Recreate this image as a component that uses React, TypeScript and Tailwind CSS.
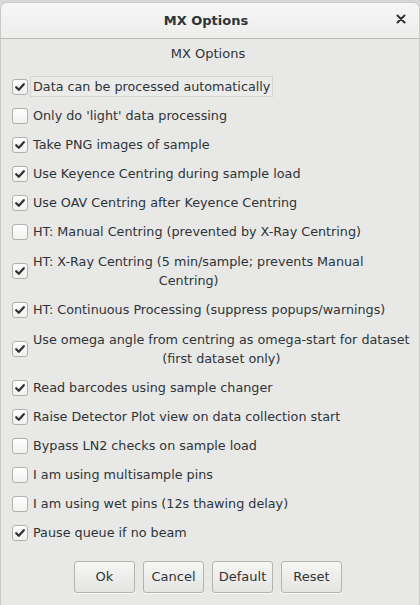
import React from "react";

type Opt = { label: React.ReactNode; checked: boolean; multi?: boolean };

const options: Opt[] = [
  { label: "Data can be processed automatically", checked: true },
  { label: "Only do 'light' data processing", checked: false },
  { label: "Take PNG images of sample", checked: true },
  { label: "Use Keyence Centring during sample load", checked: true },
  { label: "Use OAV Centring after Keyence Centring", checked: true },
  { label: "HT: Manual Centring (prevented by X-Ray Centring)", checked: false },
  {
    label: (
      <>
        <span className="block">HT: X-Ray Centring (5 min/sample; prevents Manual</span>
        <span className="block pr-[19px]">Centring)</span>
      </>
    ),
    checked: true,
    multi: true,
  },
  { label: "HT: Continuous Processing (suppress popups/warnings)", checked: true },
  {
    label: (
      <>
        <span className="block">Use omega angle from centring as omega-start for dataset</span>
        <span className="block">(first dataset only)</span>
      </>
    ),
    checked: true,
    multi: true,
  },
  { label: "Read barcodes using sample changer", checked: true },
  { label: "Raise Detector Plot view on data collection start", checked: true },
  { label: "Bypass LN2 checks on sample load", checked: false },
  { label: "I am using multisample pins", checked: false },
  { label: "I am using wet pins (12s thawing delay)", checked: false },
  { label: "Pause queue if no beam", checked: true },
];

function CheckBox({ checked }: { checked: boolean }) {
  return (
    <div className="w-4 h-4 shrink-0 rounded-[3px] border border-[#b0b0ad] bg-gradient-to-b from-[#ffffff] to-[#f1f1f0] flex items-center justify-center">
      {checked && (
        <svg width="12" height="12" viewBox="0 0 12 12">
          <path d="M2.2 6.2 L4.8 8.8 L9.8 3.2" fill="none" stroke="#2e3436" strokeWidth="2.3" strokeLinecap="round" strokeLinejoin="round" />
        </svg>
      )}
    </div>
  );
}

function Row({ opt, focused }: { opt: Opt; focused?: boolean }) {
  return (
    <div className={"flex items-center pl-[11px] " + (opt.multi ? "py-[5.5px]" : "py-[5px]")}>
      <CheckBox checked={opt.checked} />
      <div
        className={
          "ml-[3px] px-[2px] leading-[19px] whitespace-nowrap " +
          (opt.multi ? "text-center " : "") +
          (focused ? "outline outline-1 outline-[#d3d3d1] bg-[#ebebea]" : "")
        }
      >
        {opt.label}
      </div>
    </div>
  );
}

function Btn({ children }: { children: React.ReactNode }) {
  return (
    <button className="w-[61px] h-[32px] rounded-[3px] border border-[#b3b3b0] bg-gradient-to-b from-[#f6f6f5] to-[#e4e4e2] text-[#2e3436] text-[13px] shadow-[0_1px_0_rgba(255,255,255,0.8)]">
      {children}
    </button>
  );
}

export default function App() {
  return (
    <div
      className="w-[420px] h-[605px] bg-[#d8d8d8] pt-[2px] overflow-hidden text-[12.75px] text-[#2e3436]"
      style={{ fontFamily: '"DejaVu Sans", sans-serif' }}
    >
      <div className="h-[603px] flex flex-col rounded-t-[7px] bg-[#e8e8e7] border-t border-x border-[#c9c9c7] overflow-hidden">
        <div className="relative h-[36px] shrink-0 flex items-center justify-center bg-gradient-to-b from-[#f6f6f6] to-[#ededec] border-b border-[#b9b9b6]">
          <span className="font-bold text-[13px] -ml-[8px]">MX Options</span>
          <span className="absolute right-[11px] top-[9px]">
            <svg width="14" height="14" viewBox="0 0 14 14">
              <path d="M3.5 3.5 L10.5 10.5 M10.5 3.5 L3.5 10.5" stroke="#2e3436" strokeWidth="2" strokeLinecap="round" />
            </svg>
          </span>
        </div>
        <div className="h-[33px] shrink-0 flex items-center justify-center pb-[4px]">
          <span className="-ml-[4px] text-[13px]">MX Options</span>
        </div>
        <div className="flex flex-col">
          {options.map((o, i) => (
            <Row key={i} opt={o} focused={i === 0} />
          ))}
        </div>
        <div className="flex justify-center gap-[8px] mt-[14px] pr-[4px]">
          <Btn>Ok</Btn>
          <Btn>Cancel</Btn>
          <Btn>Default</Btn>
          <Btn>Reset</Btn>
        </div>
      </div>
    </div>
  );
}
